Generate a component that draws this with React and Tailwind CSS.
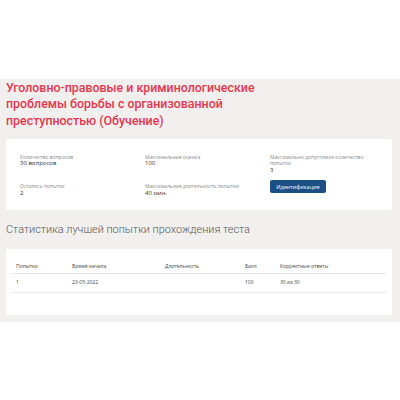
import React from "react";

const Info = ({ label, value }) => (
  <div className="flex flex-col">
    <div className="text-[5px] leading-[6.5px] text-[#8a8a8a]">{label}</div>
    <div className="text-[6px] leading-[7.5px] text-[#333]">{value}</div>
  </div>
);

const App = () => {
  const rows = [{ n: "1", start: "23-05-2022", dur: "", score: "100", correct: "30 из 30" }];

  return (
    <div className="w-[400px] h-[400px] bg-white" style={{ fontFamily: '"Open Sans", "Noto Sans", sans-serif' }}>
      <div className="h-[79px]"></div>
      <div className="bg-[#f1f0ee] px-[6px] pt-[1px] pb-[7px] w-[400px]">
        <h1
          className="text-[12.4px] leading-[16.3px] font-medium text-[#e8364f] w-[275px]"
          style={{ fontFamily: 'Roboto, sans-serif' }}
        >
          Уголовно-правовые и криминологические проблемы борьбы с организованной преступностью (Обучение)
        </h1>
        <div className="mt-[10px] bg-white rounded-[2px] w-[386px] h-[71px] pl-[14px] pt-[15px] grid grid-cols-[125px_125px_110px] gap-y-[9px] content-start">
          <Info label="Количество вопросов" value="30 вопросов" />
          <Info label="Максимальная оценка" value="100" />
          <div className="flex flex-col">
            <div className="text-[5px] leading-[6.5px] text-[#8a8a8a] w-[95px]">Максимально допустимое количество попыток</div>
            <div className="text-[6px] leading-[7.5px] text-[#333]">3</div>
          </div>
          <Info label="Осталось попыток" value="2" />
          <Info label="Максимальная длительность попытки" value="40 мин." />
          <div className="-mt-[3px]">
            <div className="w-[56px] h-[13px] bg-[#1d4f85] rounded-[2px] flex items-center justify-center text-[5.5px] text-white">
              Идентификация
            </div>
          </div>
        </div>
        <h2
          className="mt-[13px] text-[10.9px] leading-[14px] font-light text-[#555]"
          style={{ fontFamily: 'Roboto, sans-serif' }}
        >
          Статистика лучшей попытки прохождения теста
        </h2>
        <div className="mt-[12px] bg-white rounded-[2px] w-[386px] h-[66px] px-[6px] pt-[14px]">
          <div className="grid grid-cols-[56px_93px_80px_35px_1fr] border-b border-[#e6e6e6] pb-[3px] px-[4px] text-[5px] leading-[7px] text-[#444]">
            <div>Попытки</div>
            <div>Время начала</div>
            <div>Длительность</div>
            <div>Балл</div>
            <div>Корректные ответы</div>
          </div>
          {rows.map((r, i) => (
            <div
              key={i}
              className="grid grid-cols-[56px_93px_80px_35px_1fr] border-b border-[#e6e6e6] pt-[5px] pb-[6px] px-[4px] text-[5px] leading-[7px] text-[#444]"
            >
              <div>{r.n}</div>
              <div>{r.start}</div>
              <div>{r.dur}</div>
              <div>{r.score}</div>
              <div>{r.correct}</div>
            </div>
          ))}
        </div>
      </div>
    </div>
  );
};

export default App;
